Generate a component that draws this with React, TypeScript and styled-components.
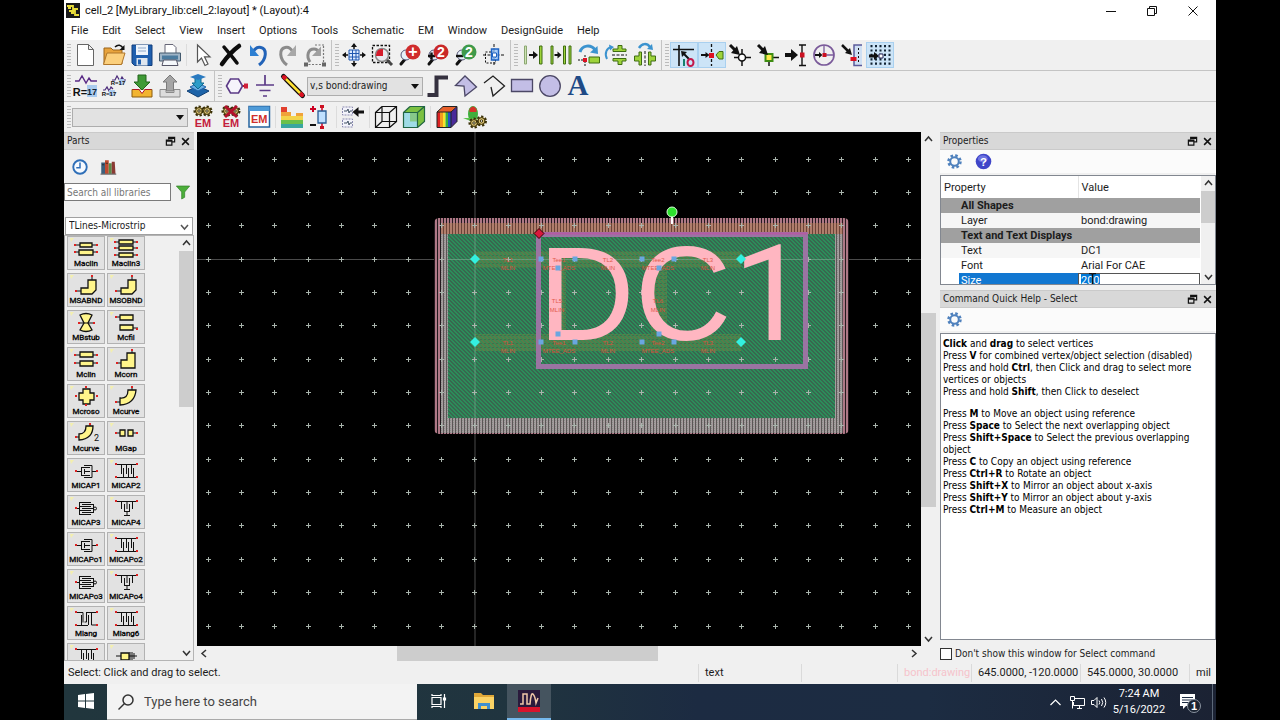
import React, { useEffect, useRef } from "react";
import styled, { createGlobalStyle, css } from "styled-components";

const UI = `Roboto, "Open Sans", sans-serif`;
const TAHOMA = `"DejaVu Sans Condensed", "DejaVu Sans", sans-serif`;

const Global = createGlobalStyle`
  * { box-sizing: border-box; }
  html, body { margin: 0; background: #000; }
  body { font: 11px/16px ${UI}; color: #1c1c1c; }
  button, input, select { font: inherit; color: inherit; }
  button { border: 0; padding: 0; background: none; }
  h1, h2, p { margin: 0; font-weight: 400; font-size: inherit; }
`;

const Screen = styled.div`
  height: 100vh;
  padding: 0 5%;
  display: flex;
  overflow: hidden;
`;
const Desktop = styled.div`
  flex: 1;
  min-width: 0;
  display: flex;
  flex-direction: column;
  background: #f0f0f0;
`;

/* ---------- title and menus ---------- */
const TitleBar = styled.header`
  height: 21px;
  display: flex;
  align-items: center;
  gap: 5px;
  padding: 0 5px 0 2px;
  background: #fff;
  h1 { flex: 1; color: #111; white-space: nowrap; }
`;
const WindowButton = styled.button`
  width: 36px;
  height: 20px;
  display: grid;
  place-items: center;
`;
const MenuBar = styled.nav`
  height: 19px;
  display: flex;
  align-items: center;
  background: #fff;
  gap: 14px;
  padding: 1px 0 0 7px;
`;
const MenuItem = styled.button`
  white-space: nowrap;
`;

/* ---------- toolbars ---------- */
const ToolRow = styled.div`
  height: 31px;
  display: flex;
  align-items: center;
  border-bottom: 1px solid #c4c4c4;
  background: #f0f0f0;
  &:last-of-type {
    height: 30px;
    border-bottom: 0;
  }
`;
const ToolGroup = styled.div<{ $last?: boolean }>`
  height: 30px;
  display: flex;
  align-items: center;
  padding-right: 2px;
  border-right: ${(p) => (p.$last ? "0" : "1px solid #c4c4c4")};
`;
const Grip = styled.span`
  width: 4px;
  height: 24px;
  margin: 0 1px 0 3px;
  background: radial-gradient(circle, #9a9a9a 1px, transparent 1px) 0 0 / 2px 3px;
  opacity: 0.6;
`;
const Divider = styled.span`
  width: 1px;
  height: 22px;
  margin: 0 2px;
  background: #dcdcdc;
`;
const ToolButton = styled.button<{ $on?: boolean }>`
  width: 28px;
  height: 26px;
  display: grid;
  place-items: center;
  svg { overflow: visible; }
  ${(p) =>
    p.$on &&
    css`
      background: #cce4f7;
      box-shadow: inset 0 0 0 1px #a9d0ef;
    `}
`;
const PickWrap = styled.span`
  position: relative;
  display: flex;
  margin: 0 1px 0 0;
  &::after {
    content: "";
    position: absolute;
    right: 4px;
    top: 7px;
    border: 4px solid transparent;
    border-top: 5px solid #111;
    border-bottom: 0;
    pointer-events: none;
  }
`;
const Pick = styled.select`
  width: 116px;
  height: 19px;
  padding: 0 2px;
  appearance: none;
  border: 1px solid #adadad;
  border-radius: 0;
  background: #e2e2e2;
  font: 10px/16px ${TAHOMA};
`;

/* ---------- work area ---------- */
const WorkArea = styled.main`
  flex: 1;
  min-height: 0;
  display: grid;
  grid-template-columns: 133px minmax(0, 1fr) 15px 280px;
`;
const PanelHead = styled.div`
  height: 18px;
  flex: none;
  display: flex;
  align-items: center;
  gap: 4px;
  padding: 0 3px;
  background: #d8d8d8;
  border: 1px solid #cacaca;
  border-width: 1px 0;
  font: 10px/16px ${TAHOMA};
  h2 { flex: 1; }
  button { width: 11px; height: 12px; display: grid; place-items: center; }
`;
const PartsPanel = styled.aside`
  min-height: 0;
  display: flex;
  flex-direction: column;
  margin-right: 3px;
`;
const PartsTools = styled.div`
  display: flex;
  align-items: center;
  height: 33px;
  padding: 0 6px;
  gap: 8px;
  button { width: 20px; height: 20px; display: grid; place-items: center; }
`;
const SearchLine = styled.div`
  display: flex;
  align-items: center;
  gap: 4px;
  height: 18px;
  button { display: grid; }
`;
const PartsSearch = styled.input`
  width: 107px;
  height: 18px;
  border: 1px solid #7a7a7a;
  background: #fff;
  padding: 0 2px;
  font: 10px/16px ${TAHOMA};
  &::placeholder { color: #777; opacity: 1; }
`;
const LibraryWrap = styled.div`
  position: relative;
  margin: 16px 1px 0;
  select {
    width: 100%;
    height: 18px;
    display: block;
    appearance: none;
    border: 1px solid #a0a0a0;
    border-radius: 0;
    background: #fff;
    padding: 0 3px;
    font: 10px/16px ${TAHOMA};
  }
  svg { position: absolute; right: 4px; top: 5px; pointer-events: none; }
`;
const PartsList = styled.div`
  flex: 1;
  min-height: 0;
  display: flex;
  justify-content: space-between;
  overflow: hidden;
  border: 1px solid #b4b4b4;
  border-left-color: #999;
`;
const Tiles = styled.div`
  display: grid;
  grid-template-columns: 38px 38px;
  grid-auto-rows: 34px;
  gap: 3px 2px;
  padding: 0 2px;
`;
const Tile = styled.button`
  display: flex;
  flex-direction: column;
  align-items: center;
  background: #e2e2e2;
  border: 1px solid #b2b2b2;
  font: 8px/10px Roboto, "Liberation Sans", sans-serif;
  color: #000;
  -webkit-text-stroke: 0.3px #000;
  svg { display: block; flex: none; }
`;

const VScroll = styled.div`
  width: 14px;
  display: flex;
  flex-direction: column;
  background: #f0f0f0;
`;
const HScroll = styled.div`
  height: 15px;
  display: flex;
  background: #f0f0f0;
`;
const ScrollButton = styled.button`
  width: 15px;
  height: 15px;
  flex: none;
  display: grid;
  place-items: center;
`;
const Track = styled.span<{ $grow: number }>`
  flex: ${(p) => p.$grow} 1 0;
`;
const Thumb = styled(Track)`
  background: #cdcdcd;
`;
const CanvasColumn = styled.section`
  min-width: 0;
  min-height: 0;
  display: flex;
  flex-direction: column;
`;
const CanvasFrame = styled.div`
  flex: 1;
  min-height: 0;
  overflow: hidden;
  background: #000;
  svg { display: block; width: 100%; height: 100%; }
`;
const CanvasScroll = styled(VScroll)`
  width: 15px;
  padding-bottom: 15px;
`;

/* ---------- right dock ---------- */
const Dock = styled.aside`
  min-height: 0;
  display: flex;
  flex-direction: column;
  padding-left: 4px;
`;
const DockTools = styled.div`
  height: 23px;
  flex: none;
  display: flex;
  align-items: center;
  gap: 9px;
  padding-left: 4px;
  background: #fbfbfb;
  button { width: 20px; height: 20px; display: grid; place-items: center; }
`;
const PropertyBox = styled.div`
  height: 110px;
  flex: none;
  display: flex;
  margin: 2px 0 5px;
  overflow: hidden;
  border: 1px solid #828790;
  background: #fff;
`;
const PropertyTable = styled.table`
  flex: 1;
  height: 0;
  border-collapse: collapse;
  table-layout: fixed;
  margin-right: 1px;
  th, td { padding: 0 0 0 20px; text-align: left; font-weight: 400; height: 15px; line-height: 15px; white-space: nowrap; overflow: hidden; }
  td { padding-left: 3px; }
  thead th { height: 22px; padding-left: 3px; }
  thead th:first-child { width: 137px; border-right: 1px solid #e4e4e4; }
`;
const SectionRow = styled.tr`
  background: #a0a0a0;
  && th { font-weight: 700; }
`;
const PlainRow = styled.tr<{ $alt?: boolean }>`
  background: ${(p) => (p.$alt ? "#f6f6f6" : "#fff")};
`;
const EditRow = styled.tr`
  && th { color: #fff; background: linear-gradient(90deg, #fff 18px, #1177d1 18px); }
  && td { padding: 0; }
`;
const SizeCell = styled.div`
  position: relative;
  display: flex;
  svg { position: absolute; left: 10px; top: 0; }
`;
const SizeInput = styled.input`
  width: 100%;
  height: 15px;
  display: block;
  outline: 0;
  border: 1px solid #555;
  padding: 0 2px;
  font: 11px/13px ${UI};
  &::selection { background: #0078d7; color: #fff; }
`;
const HelpBox = styled.div`
  flex: 1;
  min-height: 0;
  overflow: hidden;
  margin-top: 2px;
  padding: 4px 22px 4px 2px;
  border: 1px solid #828790;
  background: #fff;
  color: #000;
  font: 10px/12px ${TAHOMA};
  p + p.next { margin-top: 10px; }
`;
const HideHelp = styled.label`
  height: 21px;
  flex: none;
  display: flex;
  align-items: center;
  gap: 3px;
  padding: 7px 0 0;
  white-space: nowrap;
  font: 10px/14px ${TAHOMA};
  input {
    appearance: none;
    width: 12px;
    height: 12px;
    margin: 0;
    border: 1px solid #333;
    background: #fff;
  }
`;

/* ---------- status bar and taskbar ---------- */
const StatusBar = styled.footer`
  height: 23px;
  display: flex;
  align-items: center;
  padding: 1px 0 0 4px;
`;
const StatusCell = styled.span<{ $w?: number; $pink?: boolean }>`
  ${(p) => (p.$w ? `width: ${p.$w}px;` : "flex: 1;")}
  height: 18px;
  line-height: 18px;
  padding-left: ${(p) => (p.$w ? 6 : 0)}px;
  border-left: ${(p) => (p.$w ? "1px solid #dadada" : "0")};
  color: ${(p) => (p.$pink ? "#f6c3cb" : "#1c1c1c")};
  white-space: nowrap;
`;
const TaskBar = styled.footer`
  height: 36px;
  display: flex;
  align-items: stretch;
  background: linear-gradient(90deg, #21363d, #20343f 40%, #1c2b42 55%, #1c2c42 75%, #1b2233);
  color: #fff;
`;
const TaskButton = styled.button<{ $active?: boolean; $w?: number }>`
  width: ${(p) => p.$w ?? 44}px;
  display: grid;
  place-items: center;
  background: ${(p) => (p.$active ? "#45545f" : "transparent")};
  border-bottom: 2px solid ${(p) => (p.$active ? "#76b9ed" : "transparent")};
`;
const TaskSearch = styled.label`
  width: 310px;
  display: flex;
  align-items: center;
  gap: 7px;
  padding-left: 10px;
  background: #f3f3f3;
  border-bottom: 1px solid #aaa;
  input {
    flex: 1;
    min-width: 0;
    border: 0;
    outline: 0;
    background: none;
    font: 13px/20px ${UI};
  }
  input::placeholder { color: #444; opacity: 1; }
`;
const TaskItems = styled.div`
  flex: 1;
  display: flex;
  gap: 1px;
`;
const Tray = styled.div`
  display: flex;
  align-items: center;
  button { display: grid; place-items: center; width: 22px; }
`;
const Clock = styled.time`
  width: 58px;
  margin-right: 8px;
  text-align: center;
  line-height: 16px;
`;
const ShowDesktop = styled.span`
  align-self: stretch;
  width: 4px;
  margin-left: 14px;
  border-left: 1px solid #5c6878;
`;

/* ---------- icons ---------- */
const K = "#111";
const T = (p: { x: number; y: number; s: number; f: string; children: string; serif?: boolean }) => (
  <text x={p.x} y={p.y} fontSize={p.s} fill={p.f} fontWeight={700}
    fontFamily={p.serif ? "Liberation Serif, serif" : "Liberation Sans, sans-serif"} textAnchor="middle">
    {p.children}
  </text>
);
const gearMini = (x: number, y: number) => (
  <g fill="#d8c070" stroke="#3a3008">
    <circle cx={x} cy={y} r="4" strokeWidth="3" strokeDasharray="2 1.6" />
    <circle cx={x} cy={y} r="3.4" strokeWidth="1" />
    <circle cx={x} cy={y} r="1.2" strokeWidth="1" fill="#fff" />
  </g>
);
const magnifier = (c: string, label: string, sign?: string) => (
  <>
    <path d="M8 15 3 21" stroke={K} strokeWidth="3" strokeLinecap="round" />
    <circle cx="8" cy="12" r="5" fill="#e6f0fa" stroke="#557" strokeWidth="1" />
    {sign && <path d={sign === "+" ? "M2 13h7M5.500 9.500v7" : "M2 13h7"} stroke={K} strokeWidth="2.400" />}
    <circle cx="15" cy="9" r="7.500" fill={c} />
    <T x={15} y={14} s={label === "2" ? 14 : 16} f="#fff">{label}</T>
  </>
);

const icons: Record<string, React.ReactNode> = {
  new: <path d="M3.500 1.500h11l5 5v16h-16zM14.500 1.500v5h5" fill="#fff" stroke="#666" />,
  open: (
    <>
      <path d="M2 21V5h7l2 2h9v14z" fill="#e8a33c" stroke="#9a641a" />
      <path d="M1.500 21.500 5 10h18l-3.500 11.500z" fill="#fbcf7c" stroke="#b0762a" />
      <path d="M13 4c3-3 6-2 8 1" stroke={K} strokeWidth="1.500" fill="none" /><path d="M22.500 2v5h-5z" fill={K} />
    </>
  ),
  save: (
    <>
      <path d="M2 2h20v20.500H4.500L2 20z" fill="#1f5fae" stroke="#123e7c" />
      <path d="M6 2h12v10H6z" fill="#eef4fb" /><path d="M8 5h8M8 8h8" stroke="#8fa8c8" />
      <path d="M6.500 15h11v7.500h-11z" fill="#dfe6ee" /><path d="M8 16.500h3v5H8z" fill="#1f5fae" />
    </>
  ),
  print: (
    <>
      <path d="M7 10V1.500h8l3 3V10" fill="#fff" stroke="#667" />
      <path d="M1.500 10h21v8h-21z" fill="#9fb4c6" stroke="#42586c" /><path d="M4 12.500h16v4H4z" fill="#4b7b9e" />
      <path d="M5.500 17h13l1.500 5.500H4z" fill="#f5f8fb" stroke="#556" />
    </>
  ),
  pointer: <path d="M6.500 2v17l4-4 3.500 7.500 3-1.500-3.500-7.200h5.500z" fill="#fff" stroke="#555" strokeWidth="1.200" />,
  remove: (
    <>
      <path d="M3 21C8 14 13 8 20 3" stroke="#0c0c0c" strokeWidth="4.500" strokeLinecap="round" fill="none" />
      <path d="M5 4c4 5 8 9 13 16" stroke="#0c0c0c" strokeWidth="3.500" strokeLinecap="round" fill="none" />
    </>
  ),
  undo: (
    <>
      <path d="M12 22C20 16 20 6 14 4.500c-3-1-6 1-8 4.500" fill="none" stroke="#2263b8" strokeWidth="3" />
      <path d="M3 2v11h9z" fill="#2d7fd2" />
    </>
  ),
  redo: (
    <>
      <path d="M12 22C4 16 4 6 10 4.500c3-1 6 1 8 4.500" fill="none" stroke="#8c8c8c" strokeWidth="3" />
      <path d="M21 2v11h-9z" fill="#a8a8a8" />
    </>
  ),
  redoBox: (
    <>
      <path d="M7 19C3 13 5 6 11 6c3 0 4 1 5 4" fill="none" stroke="#8c8c8c" strokeWidth="3" />
      <path d="M18 3.500V13H9z" fill="#a0a0a0" />
      <path d="M2 21.500h19M20.500 3v18M12 2h10" stroke="#777" strokeWidth="1.200" strokeDasharray="2 1.500" />
      <path d="M1 19.500h4v4H1zM19 19.500h4v4h-4z" fill="#666" />
    </>
  ),
  viewAll: (
    <>
      <path d="M7 7h10v10H7z" fill="#dcebff" stroke="#1f57b0" /><path d="M10.500 7v10M14 7v10M7 10.500h10M7 14h10" stroke="#1f57b0" />
      <path d="M12 1v5M12 18v5M1 12h5M18 12h5" stroke={K} strokeWidth="1.500" />
      <path d="m12 0 3 4H9zM12 24l3-4H9zM0 12l4-3v6zM24 12l-4-3v6z" fill={K} />
    </>
  ),
  zoomArea: (
    <>
      <path d="M2.500 2.500h17v17h-17z" fill="none" stroke={K} strokeWidth="1.300" strokeDasharray="2.500 1.500" />
      <circle cx="12" cy="12" r="6.500" fill="#e8e8ee" stroke="#888" strokeWidth="1.500" /><path d="M13 13V6a6 6 0 0 0-7 6v1z" fill="#d41c2c" />
      <path d="m17 17 5 5" stroke="#444" strokeWidth="3" />
    </>
  ),
  zoomIn: magnifier("#d02c2c", "+"),
  zoomIn2: magnifier("#c92828", "2", "+"),
  zoomOut2: magnifier("#3f9a4a", "2", "-"),
  center: (
    <>
      <path d="M12 1v22M1 12h22" stroke={K} strokeDasharray="3 1.500" /><path d="M3.500 9h10v11h-10z" fill="none" stroke={K} strokeDasharray="2 1.500" />
      <path d="M9.500 6h7v11h-7z" fill="#8cc0ff" fillOpacity=".7" stroke="#1d63c4" strokeWidth="1.500" /><path d="M10.500 10h4v4h-4z" fill="#fff" stroke="#1d63c4" />
    </>
  ),
  moveBar: (
    <>
      <path d="M3.500 3h2v18h-2z" fill="#cfe3b4" stroke="#8ca872" /><path d="M18.500 3h2.500v18h-2.500z" fill="#9ed33a" stroke="#3f6d12" />
      <path d="M8 12h5" stroke={K} strokeWidth="2" /><path d="m12 8 5 4-5 4z" fill={K} />
    </>
  ),
  copyBars: (
    <>
      <path d="M2 3h2v18H2zM14.500 3h2v18h-2zM20 3h2v18h-2z" fill="#9ed33a" stroke="#3f6d12" />
      <path d="M5.500 12H9" stroke={K} strokeWidth="2" /><path d="m8.500 8.500 4 3.500-4 3.500z" fill={K} />
    </>
  ),
  rotate: (
    <>
      <path d="M3 9C5 2 14 1 18 7" fill="none" stroke="#3b93cf" strokeWidth="3" /><path d="m20.500 3 .5 8-8-1.500z" fill="#3b93cf" />
      <path d="M12 14h10.500v6H12z" fill="#9ed33a" stroke="#3f6d12" /><path d="M1 17h7M8 12v11" stroke={K} strokeDasharray="2 1" /><path d="M6 15h4v4H6z" fill="#d12" />
    </>
  ),
  flipV: (
    <>
      <path d="M2 16C-1 10 2 5 6 4" fill="none" stroke="#3b93cf" strokeWidth="2" /><path d="M4 1.500 9 4 5 7.500z" fill="#3b93cf" />
      <path d="M7 12h15" stroke={K} strokeDasharray="3 1.500" />
      <path d="M8 8.500h13V6h-4V2.500h-4V6H8zM8 15.500h13V18h-4v3.500h-4V18H8z" fill="#9ed33a" stroke="#3f6d12" />
    </>
  ),
  flipH: (
    <>
      <path d="M6 5c3-5 8-5 11-1" fill="none" stroke="#3b93cf" strokeWidth="2.500" /><path d="m19 1 1 6-6-1z" fill="#3b93cf" />
      <path d="M12 8v15" stroke={K} strokeDasharray="3 1.500" />
      <path d="M8.500 9v13H6v-4H1.500v-5H6V9zM15.500 9v13H18v-4h4.500v-5H18V9z" fill="#9ed33a" stroke="#3f6d12" />
    </>
  ),
  ortho: (
    <>
      <path d="M1 6.500h21M7 2v21" stroke={K} strokeWidth="1.600" /><path d="m17 16-6-6" stroke={K} strokeWidth="2" /><path d="m9 8 6 1-5 5z" fill={K} />
      <path d="M12 16v7" stroke="#16806c" strokeWidth="2" /><ellipse cx="18.500" cy="19.500" rx="3" ry="3.500" fill="none" stroke="#c2184a" strokeWidth="2" />
    </>
  ),
  pinSnap: (
    <>
      <path d="M1 12h6" stroke={K} strokeWidth="2" /><path d="m5.500 9 4 3-4 3z" fill={K} /><path d="M11.500 1v22" stroke={K} strokeWidth="1.300" strokeDasharray="3 2" />
      <path d="M9 10h5v5H9z" fill="#d12" /><path d="M23 8.500h-4l-3 3.500 3 4h4z" fill="#9ed33a" stroke="#3f6d12" />
    </>
  ),
  vertexSnap: (
    <>
      <path d="M14 6v17M6 14.500h17" stroke={K} strokeWidth="1.500" /><circle cx="14" cy="14.500" r="3.500" fill="#fff" stroke={K} strokeWidth="1.500" />
      <path d="m2 2 6 6" stroke={K} strokeWidth="3" /><path d="M12 12 3 10l6-7z" fill={K} />
    </>
  ),
  pinDrop: (
    <>
      <path d="M13 12v11M13 14.500h10" stroke={K} strokeWidth="1.500" /><path d="M9.500 11h7v7h-7z" fill="#ffe94a" stroke="#3f8d12" strokeWidth="2" />
      <path d="m2 2 6 6" stroke={K} strokeWidth="3" /><path d="M12 12 3 10l6-7z" fill={K} />
    </>
  ),
  edgeSnap: (
    <>
      <path d="M1 12h8" stroke={K} strokeWidth="4" /><path d="m7 6 7 6-7 6z" fill={K} />
      <path d="M18 2v21M15 2h7M15 22.500h7" stroke={K} strokeWidth="1.400" /><path d="M16 9.500h4.500v5H16z" fill="#c12" />
    </>
  ),
  centerSnap: (
    <>
      <circle cx="12" cy="12" r="10" fill="none" stroke="#7a5a9a" strokeWidth="1.700" /><path d="M12 2v10h10" fill="none" stroke="#7a5a9a" strokeWidth="1.300" />
      <path d="M3 12h5" stroke={K} strokeWidth="2" /><path d="m7 9 3.500 3L7 15z" fill={K} /><path d="M10.500 10h4v4h-4z" fill="#c12" />
    </>
  ),
  intersect: (
    <>
      <path d="M22 2h-8v20.500h8" fill="#cfe0f4" stroke="#5b5b9a" strokeWidth="1.500" /><path d="M18.500 5v15" stroke={K} strokeDasharray="2 2" />
      <path d="m2 2 6 6" stroke={K} strokeWidth="2.500" /><path d="m12 12-7-2 5-5z" fill={K} /><path d="M10.500 14h6v4h-6z" fill="#d12" />
    </>
  ),
  gridSnap: (
    <>
      <path d="M3.500 2v21M8 2v21M12.500 2v21M17 2v21M21.500 2v21" stroke="#123" strokeWidth="2" strokeDasharray="2.200 2.200" />
      <path d="M1 13h6" stroke={K} strokeWidth="3" /><path d="m6 9 5 4-5 4z" fill={K} /><path d="M11 11h4v4h-4z" fill="#fff" stroke="#225" />
    </>
  ),
  value: (
    <>
      <path d="M1 7h4l3-5 4 7 3-5 2 3h6" fill="none" stroke="#5a2a86" strokeWidth="1.400" />
      <path d="M13 11h10v12H13z" fill="#a9cbee" /><T x={6} y={22} s={11} f={K}>R=</T><T x={18} y={21} s={9} f="#123">17</T>
    </>
  ),
  values: (
    <>
      <path d="M10 6h3l2-4 3 5 2-4 2 3h2M1 16h2l2-3 2 4 2-4 2 2" fill="none" stroke="#4a2a7a" strokeWidth="1.200" />
      <path d="M17 5h5v6h-5zM7 16h6v6H7z" fill="#a9cbee" />
      <T x={16} y={11} s={6} f={K}>R=17</T><T x={7} y={22} s={6} f={K}>R=17</T>
    </>
  ),
  pushIn: (
    <>
      <path d="M2 15.500h20V23H2z" fill="#f2b430" stroke="#8a5a0c" /><path d="M3 15.500h6l3 4 3-4h6" fill="#fff" stroke="#b3162a" />
      <path d="M8 1h8v7h4l-8 8-8-8h4z" fill="#3f9a36" stroke="#23641d" />
    </>
  ),
  popOut: (
    <>
      <path d="m12 1 7 7h-3.500v9h-7V8H5z" fill="#a5a5a5" stroke="#7b7b7b" /><path d="M2 15.500h6v3h8v-3h6V23H2z" fill="#dcdcdc" stroke="#8a8a8a" />
    </>
  ),
  layers: (
    <>
      <path d="m12 12 11 5-11 6-11-6z" fill="#1d63a8" stroke="#0f3f74" /><path d="m12 9 8 4-8 4-8-4z" fill="#68aee4" stroke="#1d63a8" />
      <path d="M9 3h6v6h3l-6 6-6-6h3z" fill="#2c9cc8" stroke="#0f6a90" /><path d="m12 0 8 3-8 3-8-3z" fill="#2a7ac0" />
    </>
  ),
  port: (
    <>
      <path d="M1.500 12 5.500 5h8l4 7-4 7h-8z" fill="#f6f4fb" stroke="#5b3a86" strokeWidth="1.600" /><path d="M18 12h4" stroke="#b12" strokeWidth="2" /><path d="M19 9.500h4v5h-4z" fill="#d0203a" />
    </>
  ),
  ground: <path d="M12 1v10M3 11h18M6.500 16.500h11M10 22h4" stroke="#5b3a86" strokeWidth="1.700" />,
  line: (
    <>
      <path d="M2.500 2.500 21.500 21.500" stroke="#111" strokeWidth="5" strokeLinecap="round" /><path d="M3 3 21 21" stroke="#d12" strokeWidth="4" strokeLinecap="round" />
      <path d="m5 5 14 14" stroke="#111" strokeWidth="5" /><path d="m5 5 14 14" stroke="#ffe033" strokeWidth="2.500" />
    </>
  ),
  trace: <path d="M1.500 21h9V3.500H22" fill="none" stroke="#35313f" strokeWidth="4" />,
  polygon: <path d="M1.500 11.500 11 2l11.500 11L11 22l-1-10z" fill="#c3bee6" stroke="#4b4766" strokeWidth="1.300" />,
  polyline: <path d="m2 9 9-7 11.500 10L11 22l-2-9" fill="none" stroke="#222" strokeWidth="1.300" />,
  rect: <path d="M1.500 5.500h21v12h-21z" fill="#c3bee6" stroke="#4b4766" strokeWidth="1.300" />,
  circle: <circle cx="12" cy="12" r="10.300" fill="#c3bee6" stroke="#4b4766" strokeWidth="1.300" />,
  text: <T x={12} y={21} s={29} f="#1e4a86" serif>A</T>,
  emSetup: <>{gearMini(8, 6)}{gearMini(16, 6)}<T x={12} y={22} s={11} f="#c3203c">EM</T></>,
  emStop: (
    <>
      {gearMini(8, 6)}{gearMini(16, 6)}<T x={12} y={22} s={11} f="#c3203c">EM</T><path d="m6 1 12 11M18 1 6 12" stroke="#b3102c" strokeWidth="3" />
    </>
  ),
  emWindow: (
    <>
      <path d="M2 1.500h20.500v20.500H2z" fill="#fff" stroke="#24639e" strokeWidth="1.500" /><path d="M2 1.500h20.500V6H2z" fill="#4f9bd8" /><T x={12.2} y={18} s={11} f="#d0302c">EM</T>
    </>
  ),
  substrate: (
    <>
      <path d="M1 2h6v5H1z" fill="#e2402e" /><path d="M1 7h10v4h5V8h7v15H1z" fill="#f0a23a" /><path d="M1 11h22v4H1z" fill="#f3d34a" /><path d="M1 15h22v4H1z" fill="#6cc04a" /><path d="M1 19h22v4H1z" fill="#3aa6a0" />
    </>
  ),
  ports: (
    <>
      <path d="M2 4h6M5 1v6" stroke="#c02" strokeWidth="2" /><path d="M2 20h6" stroke={K} strokeWidth="2" /><path d="M14 1v22" stroke="#c02" strokeWidth="1.500" />
      <path d="M10 6h8v12h-8z" fill="#bfe0ff" stroke="#2a5c94" strokeWidth="1.300" /><path d="M12 0h4v3h-4zM12 21h4v3h-4z" fill="#c12" />
    </>
  ),
  sync: (
    <>
      <path d="M1.500 2h10v8h-10zM1.500 14h10v8h-10z" fill="#f3f3fb" stroke="#8a8ab0" strokeDasharray="2 1" /><path d="M3 6h3l1-2 1 4 1-2h2M3 18h3l1-2 1 4 1-2h2" fill="none" stroke="#456" />
      <path d="M16 7h7" stroke={K} strokeWidth="3" /><path d="m17.500 2-6 5 6 5z" fill={K} />
    </>
  ),
  wire: <path d="M1.500 7.500h14v15h-14zM8 1.500h14.500v15H8zM1.500 7.500l6.500-6M15.500 7.500l7-6M1.500 22.500l6.500-6M15.500 22.500l7-6" fill="none" stroke={K} strokeWidth="1.200" />,
  solid: (
    <>
      <path d="M8 1.500h14.500v15l-7 6h-14v-15z" fill="#7cc142" /><path d="M1.500 7.500h14v15h-14z" fill="#9fdce6" /><path d="M8 7.500h7.500v9H8z" fill="#86c98a" />
      <path d="M1.500 7.500h14v15h-14zM8 1.500h14.500v15l-7 6M1.500 7.500l6.500-6M15.500 7.500l7-6" fill="none" stroke="#264" strokeWidth="1.200" />
    </>
  ),
  rainbow: (
    <>
      <path d="M2 7h3v15.500H2z" fill="#d22" /><path d="M5 7h3v15.500H5z" fill="#f29a1f" /><path d="M8 7h2.500v15.500H8z" fill="#f6e52a" /><path d="M10.500 7h2.500v15.500h-2.500z" fill="#35b03c" /><path d="M13 7h3v15.500h-3z" fill="#2450c8" />
      <path d="m2 7 6-5.500h14L16 7z" fill="#e8602a" /><path d="m16 7 6-5.500v15l-6 6z" fill="#4a2a9a" /><path d="m2 7 6-5.500h14v15l-6 6H2zM16 7v15.500M2 7h14l6-5.500" fill="none" stroke="#222" />
    </>
  ),
  solve: (
    <>
      <ellipse cx="10" cy="9" rx="5" ry="8" fill="#3fae3c" /><path d="M6.500 4q3.500-5 7 0v3h-7z" fill="#d6322a" /><path d="M0 13h16l-6 4z" fill="#58c24a" />{gearMini(11, 18)}{gearMini(18.5, 16)}
    </>
  ),
  clock: <><circle cx="12" cy="12" r="9" fill="#f6faff" stroke="#2f6fb8" strokeWidth="2.500" /><path d="M12 6v7H7" fill="none" stroke="#2f6fb8" strokeWidth="2" /></>,
  books: (
    <>
      <path d="M3 6h5v15H3z" fill="#3d5f7c" /><path d="M8 3h5v18H8z" fill="#c04a30" /><path d="M13 7h4v14h-4z" fill="#5a8a4a" /><path d="M17 5h4l1 16h-5z" fill="#8a3a34" /><path d="M2 21.500h21M4 9h3M9 7h3" stroke="#222" />
    </>
  ),
  funnel: <path d="M2 3h20l-7.500 9v8L10 22.500V12z" fill="#4cae3a" stroke="#2f7d24" />,
  gear: (
    <>
      <circle cx="12" cy="12" r="8.500" fill="none" stroke="#4f81bd" strokeWidth="3.500" strokeDasharray="3.600 3.070" /><circle cx="12" cy="12" r="6" fill="none" stroke="#4f81bd" strokeWidth="2.800" />
    </>
  ),
  help: <><circle cx="12" cy="12" r="11" fill="#3f45c8" /><ellipse cx="11" cy="8" rx="7" ry="5" fill="#8c92f0" opacity=".6" /><T x={12} y={18} s={16} f="#fff">?</T></>,
  float: <path d="M8 7V3h13v10h-6M3 9h12v11H3zM3 11h12M8 5h13" fill="none" stroke="#111" strokeWidth="2.600" />,
  close: <path d="m3 3 18 18M21 3 3 21" stroke="#111" strokeWidth="4" />,
};

const Icon = ({ n, s = 24 }: { n: string; s?: number }) => (
  <svg width={s} height={s} viewBox="0 0 24 24" fill="none" aria-hidden="true">
    {icons[n]}
  </svg>
);

const Tools = ({ names, on = [] }: { names: string[]; on?: string[] }) => (
  <>
    {names.map((n) => (
      <ToolButton key={n} $on={on.includes(n)} aria-label={n}>
        <Icon n={n} />
      </ToolButton>
    ))}
  </>
);

const chevrons = { up: "M1 6 4.500 2 8 6", down: "M1 3l3.500 4L8 3", left: "M6 1 2 4.500 6 8", right: "M3 1l4 3.500L3 8" };
const Chevron = ({ d, c = "#333" }: { d: keyof typeof chevrons; c?: string }) => (
  <svg width="9" height="9" viewBox="0 0 9 9" aria-hidden="true">
    <path d={chevrons[d]} fill="none" stroke={c} strokeWidth="1.500" />
  </svg>
);

/* ---------- microstrip part symbols, 36 x 22 ---------- */
const box = (x: number, y: number, w: number, h: number) => (
  <path key={`${x},${y}`} d={`M${x} ${y}h${w}v${h}h${-w}z`} fill="#fff58a" stroke="#111" strokeWidth="1.300" />
);
const pins = (...at: [number, number][]) => at.map(([x, y]) => <path key={`${x}.${y}`} d={`M${x - 1} ${y - 1}h2v2h-2z`} fill="#d22" />);
const wire = (d: string) => <path d={d} fill="none" stroke="#111" strokeWidth="1" />;

const comboLines = (
  <>
    {wire("M8 5.500h21M8 18.500h21M13.500 5v10M15.500 9v9M18.500 5v10M20.500 9v9M23.500 5v10M25.500 9v9")}{pins([8, 5], [29, 5], [8, 18], [29, 18])}
  </>
);
const side = (
  <>
    {wire("M8 12.500h5M13.500 8v9M13 8.500h9M13 16.500h9M16 12.500h6M16 6.500h8v12h-8M16.500 10v5M24 12.500h5")}{pins([8, 12], [29, 12])}
  </>
);
const sideLoop = (
  <>
    {wire("M8 12.500h3M11.500 6v13M11 6.500h12M11 10.500h12M11 14.500h12M11 18.500h12M14 8.500h11M14 12.500h11M14 16.500h11M25.500 8v9")}
    <circle cx="27" cy="12.500" r="1.500" fill="none" stroke="#111" />{pins([8, 12])}
  </>
);
const hanging = (
  <>
    {wire("M8 5.500h21M13.500 5v8M16.500 8v7M19 5v8M21.500 8v7M24.500 5v8M16 15.500h6M19 15v5M16 19.500h6")}{pins([8, 5], [29, 5])}
  </>
);
const comb = (
  <>
    {wire("M8 5.500h7v10M13.500 18V8M8 18.500h12M18 5.500h11M18.500 5v10h-2M23.500 5v13h6M20.500 18V8")}{pins([8, 5], [29, 5], [8, 18], [29, 18])}
  </>
);
const symbols: Record<string, React.ReactNode> = {
  Maclin: <>{wire("M7 8h22M7 15h22")}{box(12, 6, 12, 4)}{box(11, 13, 14, 5)}{pins([7, 8], [29, 8], [7, 15], [29, 15])}</>,
  Maclin3: <>{wire("M7 5h22M7 11h22M7 18h22")}{box(11, 3, 14, 4)}{box(11, 9, 14, 4)}{box(11, 16, 14, 4)}{pins([7, 5], [29, 5], [7, 11], [29, 11], [7, 18], [29, 18])}</>,
  bend: <>{wire("M8 17h5M24 2v5")}<path d="M13 14h7V6h8v10l-4 4H13z" fill="#fff58a" stroke="#111" strokeWidth="1.300" />{pins([8, 17], [24, 2])}</>,
  MBstub: <><path d="M12 4q6-3 12 0l-4 8 4 7q-6 3-12 0l4-7z" fill="#fff58a" stroke="#111" strokeWidth="1.300" />{wire("M11 12h16")}{pins([11, 12], [26, 12])}</>,
  Mcfil: <>{wire("M8 6h6M24 17h6")}{box(12, 4, 13, 5)}{box(12, 14, 13, 5)}{pins([8, 6], [29, 18])}</>,
  Mclin: <>{wire("M7 7h22M7 15h22")}{box(12, 4, 13, 5)}{box(12, 13, 13, 5)}{pins([7, 7], [29, 7], [7, 15], [29, 15])}</>,
  Mcorn: <>{wire("M9 15h4M24 2v4")}<path d="M13 12h6V5h8v15H13z" fill="#fff58a" stroke="#111" strokeWidth="1.300" />{pins([9, 15], [24, 2])}</>,
  Mcroso: <><path d="M15 4h7v4h4v7h-4v4h-7v-4h-4V8h4z" fill="#fff58a" stroke="#111" strokeWidth="1.300" />{pins([18, 2], [8, 11], [29, 11], [18, 20])}</>,
  Mcurve: <>{wire("M8 17h5M24 2v4")}<path d="M12 13q8 1 8-8h8q-1 14-16 15z" fill="#fff58a" stroke="#111" strokeWidth="1.300" />{pins([8, 17], [24, 2])}</>,
  Mcurve2: <>{wire("M8 15h4M22 2v4")}<path d="M11 12q7 0 7-8h7q0 13-14 14z" fill="#fff58a" stroke="#111" strokeWidth="1.300" /><text x="26" y="19" fontSize="9" fill="#111">2</text>{pins([8, 15], [22, 2])}</>,
  MGap: <>{wire("M8 11h4M25 11h4")}{box(12, 8, 5, 6)}{box(20, 8, 5, 6)}{pins([8, 11], [29, 11])}</>,
  side, combo: comboLines, sideLoop, hanging, comb,
  load: <>{wire("M8 12h21M22 8v8M24 8v8M26 9v6")}{box(13, 9, 8, 7)}</>,
};
const parts: [string, string][] = [
  ["Maclin", "Maclin"], ["Maclin3", "Maclin3"], ["MSABND", "bend"], ["MSOBND", "bend"], ["MBstub", "MBstub"], ["Mcfil", "Mcfil"],
  ["Mclin", "Mclin"], ["Mcorn", "Mcorn"], ["Mcroso", "Mcroso"], ["Mcurve", "Mcurve"], ["Mcurve", "Mcurve2"], ["MGap", "MGap"],
  ["MICAP1", "side"], ["MICAP2", "combo"], ["MICAP3", "sideLoop"], ["MICAP4", "hanging"],
  ["MICAPo1", "side"], ["MICAPo2", "combo"], ["MICAPo3", "sideLoop"], ["MICAPo4", "hanging"],
  ["Mlang", "comb"], ["Mlang6", "combo"], ["", "combo"], ["", "load"],
];

/* ---------- layout drawing ---------- */
const labels: [number, number, string][] = [];
for (const y of [130, 213]) {
  labels.push([311, y, "TL1"], [311, y + 8, "MLIN"], [362, y, "Tee1"], [362, y + 8, "MTEE_ADS"], [411, y, "TL2"], [411, y + 8, "MLIN"]);
  labels.push([461, y, "Tee2"], [461, y + 8, "MTEE_ADS"], [511, y, "TL3"], [511, y + 8, "MLIN"]);
}
labels.push([360, 171, "TL5"], [360, 180, "MLIN"], [461, 171, "TL6"], [461, 180, "MLIN"]);

const handles = [344, 378, 445, 477].flatMap((x) => [[x, 127], [x, 210]]).concat([[361, 136], [361, 202], [462, 136], [462, 202]]);

const GRID = 33.35;
const ticks = Array.from({ length: 60 }, (_, col) =>
  Array.from({ length: 40 }, (_, row) => {
    const x = Math.round(10.6 + col * GRID);
    const y = Math.round(26.6 + row * GRID);
    return `M${x - 2} ${y + 0.5}h5M${x + 0.5} ${y - 2}v5`;
  }).join("")
).join("");

const LayoutDrawing = () => (
  <svg role="img" aria-label="Layout of cell_2">
    <defs>
      <pattern id="green" width="4" height="4" patternUnits="userSpaceOnUse" shapeRendering="crispEdges">
        <path d="M0 0h4v4H0z" fill="#2c8c5a" /><path d="M0 0h2v1H0zM1 1h2v1H1zM2 2h2v1H2zM3 3h1v1H3zM0 3h1v1H0z" fill="#38684f" />
      </pattern>
      <pattern id="stripe" width="3" height="3" patternUnits="userSpaceOnUse" shapeRendering="crispEdges">
        <path d="M0 0h3v3H0z" fill="#ae7886" /><path d="M0 0h1v3H0z" fill="#241a1e" />
      </pattern>
      <pattern id="copper" width="3" height="3" patternUnits="userSpaceOnUse" shapeRendering="crispEdges">
        <path d="M0 0h3v3H0z" fill="#b07e6c" /><path d="M0 0h1v3H0z" fill="#6b4438" />
      </pattern>
      <pattern id="grain" width="3" height="2" patternUnits="userSpaceOnUse" shapeRendering="crispEdges">
        <path d="M0 0h3v2H0z" fill="#a59c9e" /><path d="M0 0h1v2H0z" fill="#5c5656" /><path d="M1 0h1v1H1z" fill="#8a908a" />
      </pattern>
      <pattern id="band" width="4" height="4" patternUnits="userSpaceOnUse" shapeRendering="crispEdges">
        <path d="M0 0h4v4H0z" fill="#66803c" opacity=".25" /><path d="M0 0h2v1H0zM1 1h2v1H1zM2 2h2v1H2z" fill="#6a8448" opacity=".6" />
      </pattern>
    </defs>
    <path d="M278 0v600M0 127.500h1200" stroke="#4a4a4a" />
    <rect x="237" y="86" width="415" height="216" rx="5" fill="url(#stripe)" />
    <rect x="244" y="91" width="402" height="12" fill="url(#copper)" />
    <rect x="244" y="102" width="402" height="199" fill="url(#grain)" />
    <rect x="251" y="102" width="387" height="184" fill="url(#green)" />
    <g fill="url(#band)">
      <path d="M278 119h266v17H278zM278 202h266v17H278zM353 136h16v66h-16zM454 136h16v66h-16z" />
    </g>
    <path d="M278 102v184M251 127.500h387" stroke="#7fae94" opacity=".6" />
    <path d={ticks} stroke="#a9b4ac" />
    <path d="M341.500 102.500h267v132h-267z" fill="none" stroke="#9a74a2" strokeWidth="5" />
    <path d="M340 101.500h270" stroke="#b45aa4" strokeWidth="2" />
    <text x="341" y="208" fontSize="134" fill="#ffb6c1" fontFamily="Liberation Sans, Arial, sans-serif">
      DC<tspan x="536" fontFamily="Roboto, sans-serif">1</tspan>
    </text>
    <g fontSize="6" fill="#e0523c" opacity=".9" textAnchor="middle" fontFamily="Liberation Sans, sans-serif">
      {labels.map(([x, y, s], i) => <text key={i} x={x} y={y}>{s}</text>)}
    </g>
    {handles.map(([x, y]) => <rect key={`${x}-${y}`} x={x - 2.5} y={y - 2.5} width="5" height="5" fill="#6aa6e0" />)}
    {[[278, 127], [544, 127], [278, 210], [544, 210]].map(([x, y]) => (
      <path key={`${x}-${y}`} d={`M${x} ${y - 5}l5 5-5 5-5-5z`} fill="#33f0e0" />
    ))}
    <path d="m342 96.500 5 5-5 5-5-5z" fill="#d8183c" stroke="#300" />
    <path d="M475 84v8" stroke="#fff" strokeWidth="2" />
    <circle cx="475" cy="80" r="5" fill="#2ee02e" stroke="#d8ffd8" />
  </svg>
);

/* ---------- panels ---------- */
const HeadButtons = () => (
  <>
    <button aria-label="Float"><Icon n="float" s={11} /></button>
    <button aria-label="Close"><Icon n="close" s={9} /></button>
  </>
);

const Scroll = ({ grow }: { grow: [number, number, number] }) => (
  <>
    <ScrollButton aria-label="Scroll up"><Chevron d="up" /></ScrollButton>
    <Track $grow={grow[0]} /><Thumb $grow={grow[1]} /><Track $grow={grow[2]} />
    <ScrollButton aria-label="Scroll down"><Chevron d="down" /></ScrollButton>
  </>
);

const Properties = () => {
  const size = useRef<HTMLInputElement>(null);
  useEffect(() => {
    size.current?.focus({ preventScroll: true });
    size.current?.setSelectionRange(0, 3);
  }, []);
  return (
    <PropertyBox>
      <PropertyTable>
        <thead><tr><th>Property</th><th>Value</th></tr></thead>
        <tbody>
          <SectionRow><th colSpan={2}>All Shapes</th></SectionRow>
          <PlainRow $alt><th>Layer</th><td>bond:drawing</td></PlainRow>
          <SectionRow><th colSpan={2}>Text and Text Displays</th></SectionRow>
          <PlainRow $alt><th>Text</th><td>DC1</td></PlainRow>
          <PlainRow><th>Font</th><td>Arial For CAE</td></PlainRow>
          <EditRow>
            <th><label htmlFor="size">Size</label></th>
            <td>
              <SizeCell>
                <SizeInput id="size" ref={size} defaultValue="200" />
                <svg width="9" height="12" viewBox="0 0 9 12" aria-hidden="true">
                  <path d="M1 .5h2.500l1 1 1-1H8M4.500 1v10" fill="none" stroke="#111" strokeWidth="1.500" />
                </svg>
              </SizeCell>
            </td>
          </EditRow>
        </tbody>
      </PropertyTable>
      <VScroll><Scroll grow={[0, 32, 46]} /></VScroll>
    </PropertyBox>
  );
};

const menus = ["File", "Edit", "Select", "View", "Insert", "Options", "Tools", "Schematic", "EM", "Window", "DesignGuide", "Help"];

export default function App() {
  return (
    <>
      <Global />
      <Screen>
        <Desktop>
          <TitleBar>
            <svg width="14" height="15" viewBox="0 0 14 15" aria-hidden="true">
              <path d="M0 0h14v15H0z" fill="#1a1a1a" /><path d="M1 3h6v3h5M3 8h6v4h4M2 5h3M5 10h3" fill="none" stroke="#e8dc3a" strokeWidth="1.800" />
            </svg>
            <h1>cell_2 [MyLibrary_lib:cell_2:layout] * (Layout):4</h1>
            <WindowButton aria-label="Minimize"><svg width="10" height="10"><path d="M0 5.500h10" stroke="#111" /></svg></WindowButton>
            <WindowButton aria-label="Restore">
              <svg width="10" height="10" fill="none" stroke="#111"><path d="M.5 2.500h7v7h-7zM2.500 2.500v-2h7v7h-2" /></svg>
            </WindowButton>
            <WindowButton aria-label="Close"><svg width="10" height="10" stroke="#111"><path d="m.5.5 9 9M9.500.5l-9 9" /></svg></WindowButton>
          </TitleBar>
          <MenuBar>{menus.map((m) => <MenuItem key={m}>{m}</MenuItem>)}</MenuBar>

          <ToolRow>
            <ToolGroup>
              <Grip />
              <Tools names={["new", "open", "save", "print"]} />
              <Divider />
              <Tools names={["pointer", "remove", "undo", "redo", "redoBox"]} />
            </ToolGroup>
            <ToolGroup>
              <Grip />
              <Tools names={["viewAll", "zoomArea", "zoomIn", "zoomIn2", "zoomOut2", "center"]} />
            </ToolGroup>
            <ToolGroup>
              <Grip />
              <Tools names={["moveBar", "copyBars", "rotate", "flipV", "flipH"]} />
            </ToolGroup>
            <ToolGroup $last>
              <Grip />
              <Tools
                names={["ortho", "pinSnap", "vertexSnap", "pinDrop", "edgeSnap", "centerSnap", "intersect", "gridSnap"]}
                on={["ortho", "pinSnap", "gridSnap"]}
              />
            </ToolGroup>
          </ToolRow>
          <ToolRow>
            <ToolGroup>
              <Grip />
              <Tools names={["value", "values", "pushIn", "popOut", "layers"]} />
            </ToolGroup>
            <ToolGroup $last>
              <Grip />
              <Tools names={["port", "ground", "line"]} />
              <PickWrap><Pick aria-label="Entry layer"><option>v,s bond:drawing</option></Pick></PickWrap>
              <Tools names={["trace", "polygon", "polyline", "rect", "circle", "text"]} />
            </ToolGroup>
          </ToolRow>
          <ToolRow>
            <ToolGroup $last>
              <Grip />
              <PickWrap><Pick aria-label="EM setup"><option></option></Pick></PickWrap>
              <Tools names={["emSetup", "emStop", "emWindow"]} />
              <Divider />
              <Tools names={["substrate", "ports"]} />
              <Divider />
              <Tools names={["sync"]} />
              <Divider />
              <Tools names={["wire", "solid"]} />
              <Divider />
              <Tools names={["rainbow", "solve"]} />
            </ToolGroup>
          </ToolRow>

          <WorkArea>
            <PartsPanel>
              <PanelHead><h2>Parts</h2><HeadButtons /></PanelHead>
              <PartsTools>
                <button aria-label="Recent"><Icon n="clock" s={18} /></button>
                <button aria-label="Libraries"><Icon n="books" s={18} /></button>
              </PartsTools>
              <SearchLine>
                <PartsSearch aria-label="Search all libraries" placeholder="Search all libraries" />
                <button aria-label="Filter"><Icon n="funnel" s={16} /></button>
              </SearchLine>
              <LibraryWrap>
                <select aria-label="Library"><option>TLines-Microstrip</option></select>
                <Chevron d="down" c="#555" />
              </LibraryWrap>
              <PartsList>
                <Tiles>
                  {parts.map(([name, sym], i) => (
                    <Tile key={i} aria-label={name || "Part"}>
                      <svg width="36" height="22" viewBox="0 0 36 22" aria-hidden="true">
                        <path d="M2 1h4l-3 4z" fill="#f3efb0" />{symbols[sym]}
                      </svg>
                      {name}
                    </Tile>
                  ))}
                </Tiles>
                <VScroll><Scroll grow={[0, 156, 238]} /></VScroll>
              </PartsList>
            </PartsPanel>

            <CanvasColumn>
              <CanvasFrame><LayoutDrawing /></CanvasFrame>
              <HScroll>
                <ScrollButton aria-label="Scroll left"><Chevron d="left" /></ScrollButton>
                <Track $grow={185} /><Thumb $grow={261} /><Track $grow={248} />
                <ScrollButton aria-label="Scroll right"><Chevron d="right" /></ScrollButton>
              </HScroll>
            </CanvasColumn>
            <CanvasScroll><Scroll grow={[166, 193, 124]} /></CanvasScroll>

            <Dock>
              <PanelHead><h2>Properties</h2><HeadButtons /></PanelHead>
              <DockTools>
                <button aria-label="Settings"><Icon n="gear" s={17} /></button>
                <button aria-label="Help"><Icon n="help" s={17} /></button>
              </DockTools>
              <Properties />
              <PanelHead><h2>Command Quick Help - Select</h2><HeadButtons /></PanelHead>
              <DockTools><button aria-label="Help settings"><Icon n="gear" s={17} /></button></DockTools>
              <HelpBox>
                <p><b>Click</b> and <b>drag</b> to select vertices</p>
                <p>Press <b>V</b> for combined vertex/object selection (disabled)</p>
                <p>Press and hold <b>Ctrl</b>, then Click and drag to select more vertices or objects</p>
                <p>Press and hold <b>Shift</b>, then Click to deselect</p>
                <p className="next">Press <b>M</b> to Move an object using reference</p>
                <p>Press <b>Space</b> to Select the next overlapping object</p>
                <p>Press <b>Shift+Space</b> to Select the previous overlapping object</p>
                <p>Press <b>C</b> to Copy an object using reference</p>
                <p>Press <b>Ctrl+R</b> to Rotate an object</p>
                <p>Press <b>Shift+X</b> to Mirror an object about x-axis</p>
                <p>Press <b>Shift+Y</b> to Mirror an object about y-axis</p>
                <p>Press <b>Ctrl+M</b> to Measure an object</p>
              </HelpBox>
              <HideHelp><input type="checkbox" />Don't show this window for Select command</HideHelp>
            </Dock>
          </WorkArea>

          <StatusBar>
            <StatusCell>Select: Click and drag to select.</StatusCell>
            <StatusCell $w={103}>text</StatusCell>
            <StatusCell $w={96} />
            <StatusCell $w={74} $pink>bond:drawing</StatusCell>
            <StatusCell $w={109}>645.0000, -120.0000</StatusCell>
            <StatusCell $w={109}>545.0000, 30.0000</StatusCell>
            <StatusCell $w={27}>mil</StatusCell>
          </StatusBar>
          <TaskBar>
            <TaskButton aria-label="Start" $w={43}>
              <svg width="16" height="16" viewBox="0 0 16 16" fill="#fff"><path d="m0 2 7-1v6.500H0zM8 1l8-1v7.500H8zM0 8.500h7V15l-7-1zM8 8.500h8V16l-8-1z" /></svg>
            </TaskButton>
            <TaskSearch>
              <svg width="18" height="18" viewBox="0 0 18 18" fill="none" stroke="#333" strokeWidth="1.500"><circle cx="11" cy="7" r="5" /><path d="m7.500 10.500-6 6" /></svg>
              <input aria-label="Type here to search" placeholder="Type here to search" />
            </TaskSearch>
            <TaskItems>
              <TaskButton aria-label="Task view">
                <svg width="16" height="16" viewBox="0 0 16 16" fill="none" stroke="#fff" strokeWidth="1.200"><path d="M1 4.500h9v7H1zM1 1v1.500h9V1M1 15v-1.500h9V15M13.500 1v14" /><path d="M12.500 5h2v2h-2z" fill="#fff" /></svg>
              </TaskButton>
              <TaskButton aria-label="File Explorer">
                <svg width="20" height="18" viewBox="0 0 20 18"><path d="M0 1h7l2 2h11v14H0z" fill="#e0a838" /><path d="M0 5h20v12H0z" fill="#fbd365" /><path d="M4 17v-6h12v6h-3v-3H7v3z" fill="#3f8fd0" /></svg>
              </TaskButton>
              <TaskButton aria-label="Advanced Design System" $active>
                <svg width="22" height="22" viewBox="0 0 22 22"><path d="M0 0h22v22H0z" fill="#2a1a3c" /><path d="M0 17h22v5H0z" fill="#d8142c" /><path d="M2 14h3V4h4v10h3q1-12 3-10t3 9l2-5" fill="none" stroke="#f0c8a8" strokeWidth="1.500" /></svg>
              </TaskButton>
            </TaskItems>
            <Tray>
              <button aria-label="Hidden icons"><svg width="11" height="7" fill="none" stroke="#fff" strokeWidth="1.200"><path d="m.5 6 5-5 5 5" /></svg></button>
              <button aria-label="Network"><svg width="15" height="13" viewBox="0 0 15 13" fill="none" stroke="#fff"><path d="M4 2.500h10.500v7H3.500V6M7 12.500h5M9.500 9.500v3M.5.500h4v4h-4zM2.500 4.500v8" /></svg></button>
              <button aria-label="Volume"><svg width="16" height="13" viewBox="0 0 16 13" fill="none" stroke="#fff"><path d="M.5 4.500h2.500l3-3v10l-3-3H.5zM8 4.500q1.500 2 0 4M10.500 3q2.500 3.500 0 7M13 1.500q3.500 5 0 10" /></svg></button>
              <Clock>7:24 AM<br />5/16/2022</Clock>
              <button aria-label="1 notification">
                <svg width="26" height="24" viewBox="0 0 26 24"><path d="M4 4h15v12h-9l-3 3v-3H4z" fill="#fff" /><path d="M6 7.500h11M6 10h11M6 12.500h8" stroke="#1c2b42" /><circle cx="18" cy="16" r="6.500" fill="#1b2432" stroke="#8a93a0" /><T x={18} y={20} s={11} f="#fff">1</T></svg>
              </button>
              <ShowDesktop />
            </Tray>
          </TaskBar>
        </Desktop>
      </Screen>
    </>
  );
}
